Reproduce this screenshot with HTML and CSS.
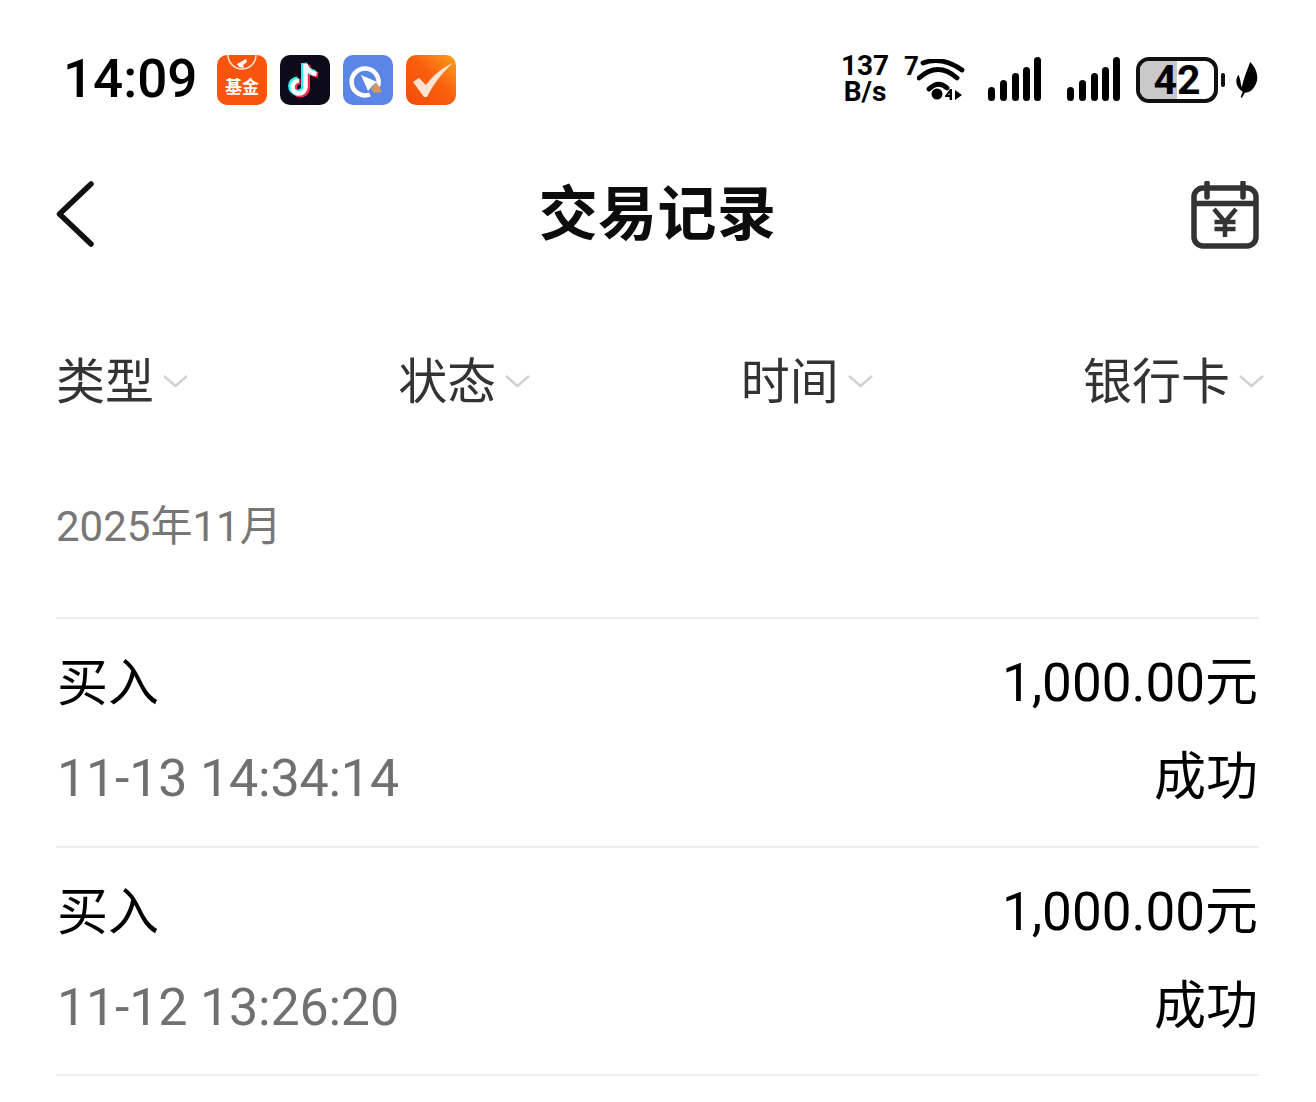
FILE: index.html
```html
<!DOCTYPE html>
<html lang="zh">
<head>
<meta charset="utf-8">
<title>交易记录</title>
<link rel="stylesheet" href="styles.css">
</head>
<body>
<div class="page">
  <header class="status">
    <div class="status-left">
      <span class="clock">14:09</span>
      <div class="apps">
        <svg class="app" viewBox="0 0 50 50"><rect width="50" height="50" rx="10" fill="#f9540b"/><path d="M11 0a14 14 0 0 0 28 0" fill="none" stroke="#fff" stroke-width="1.6" opacity=".8"/><path d="M20 9l9-5 1 3-4 3 1 3-5-1z" fill="#fff"/><text x="25" y="38" class="app-text">基金</text></svg>
        <svg class="app" viewBox="0 0 50 50"><rect width="50" height="50" rx="10" fill="#0c0b17"/><path d="M25 9v23a6.500 6.500 0 1 1-6.500-6.500M25 9c1 6 5 9 11 10" fill="none" stroke="#fd2c55" stroke-width="6" transform="translate(2 1)"/><path d="M25 9v23a6.500 6.500 0 1 1-6.500-6.500M25 9c1 6 5 9 11 10" fill="none" stroke="#25f4ee" stroke-width="6" transform="translate(-1 -1)"/><path d="M25 9v23a6.500 6.500 0 1 1-6.500-6.500M25 9c1 6 5 9 11 10" fill="none" stroke="#fff" stroke-width="4.500" transform="translate(.5 0)"/></svg>
        <svg class="app" viewBox="0 0 50 50"><rect width="50" height="50" rx="10" fill="#5b86e6"/><path d="M35 31a13.500 13.500 0 1 0-8 8.500" fill="none" stroke="#fff" stroke-width="4.500"/><path d="M18 20l16 7-5 4-4 5z" fill="#fff"/><path d="M28 33l6-5 5 9-8 1z" fill="#d69a58"/></svg>
        <svg class="app" viewBox="0 0 50 50"><defs><linearGradient id="tick" x1="1" y1="0" x2="0" y2="1"><stop offset="0" stop-color="#fba01c"/><stop offset=".45" stop-color="#f9600f"/><stop offset="1" stop-color="#f24b08"/></linearGradient></defs><rect width="50" height="50" rx="10" fill="url(#tick)"/><path d="M7 27l6-4 7 7C27 20 36 13 47 8 37 17 28 28 21 42h-3z" fill="#fde3d2"/></svg>
      </div>
    </div>
    <div class="status-right">
      <div class="speed"><span>137</span><span>B/s</span></div>
      <span class="wifi-num">7</span>
      <svg class="wifi" viewBox="0 0 48 42"><path d="M6 4Q25-3 45 11M2 19Q21 2 40 19M12 30Q21 21 30 29" fill="none" stroke="#000" stroke-width="4.800" stroke-linecap="round"/><circle cx="20" cy="35" r="5.500"/><path d="M28 37l5-7h2v11h-2.500v-3H28zM32.500 36v-2l-1.500 2zM38 31l7 5-7 5z"/></svg>
      <svg class="signal" viewBox="0 0 54 44"><rect x="0" y="30" width="7" height="14" rx="3.500"/><rect x="12" y="23" width="7" height="21" rx="3.500"/><rect x="24" y="16" width="7" height="28" rx="3.500"/><rect x="35" y="10" width="7" height="34" rx="3.500"/><rect x="46" y="0" width="7" height="44" rx="3.500"/></svg>
      <svg class="signal second" viewBox="0 0 54 44"><rect x="0" y="30" width="7" height="14" rx="3.500"/><rect x="12" y="23" width="7" height="21" rx="3.500"/><rect x="24" y="16" width="7" height="28" rx="3.500"/><rect x="35" y="10" width="7" height="34" rx="3.500"/><rect x="46" y="0" width="7" height="44" rx="3.500"/></svg>
      <div class="battery"><span class="battery-fill"></span><span class="battery-num">42</span></div>
      <span class="battery-cap"></span>
      <svg class="leaf" viewBox="0 0 22 34"><path d="M14 0c8 8 9 19 2 26-2 2-5 3-7 3l-3 5-1-1 2-5C1 24-1 17 3 12c2 5 2 8 3 12C8 15 11 8 14 0z"/></svg>
    </div>
  </header>

  <nav class="navbar">
    <svg class="back" viewBox="0 0 38 66"><path d="M35 3L3.500 33 35 63" fill="none" stroke="#111" stroke-width="5.500" stroke-linecap="round" stroke-linejoin="round"/></svg>
    <h1 class="title">交易记录</h1>
    <svg class="calendar" viewBox="0 0 68 68"><rect x="3" y="7" width="62" height="58" rx="9" fill="none" stroke="#333" stroke-width="5.500"/><path d="M3 22.500h62" stroke="#333" stroke-width="5.500"/><path d="M16 2v14M52 2v14" stroke="#333" stroke-width="5.500" stroke-linecap="round"/><path d="M23 28l11 13 11-13M34 41v15M23.500 41h21M23.500 48h21" fill="none" stroke="#333" stroke-width="4.500"/></svg>
  </nav>

  <div class="filters">
    <div class="filter"><span>类型</span><svg class="chev" viewBox="0 0 25 14"><path d="M1 2l11.500 10L24 2" fill="none" stroke="#d2d2d2" stroke-width="2.500"/></svg></div>
    <div class="filter"><span>状态</span><svg class="chev" viewBox="0 0 25 14"><path d="M1 2l11.500 10L24 2" fill="none" stroke="#d2d2d2" stroke-width="2.500"/></svg></div>
    <div class="filter"><span>时间</span><svg class="chev" viewBox="0 0 25 14"><path d="M1 2l11.500 10L24 2" fill="none" stroke="#d2d2d2" stroke-width="2.500"/></svg></div>
    <div class="filter"><span>银行卡</span><svg class="chev" viewBox="0 0 25 14"><path d="M1 2l11.500 10L24 2" fill="none" stroke="#d2d2d2" stroke-width="2.500"/></svg></div>
  </div>

  <div class="month">2025年11月</div>

  <ul class="records">
    <li class="record">
      <div class="line"><span class="kind">买入</span><span class="amount">1,000.00元</span></div>
      <div class="line"><span class="when">11-13 14:34:14</span><span class="state">成功</span></div>
    </li>
    <li class="record">
      <div class="line"><span class="kind">买入</span><span class="amount">1,000.00元</span></div>
      <div class="line"><span class="when">11-12 13:26:20</span><span class="state">成功</span></div>
    </li>
  </ul>
</div>
</body>
</html>
```
FILE: styles.css
```css
* { box-sizing: border-box; }
html, body { margin: 0; padding: 0; background: #fff; }
body { font-family: "Noto Sans CJK SC", "Noto Sans", sans-serif; color: #111; overflow: hidden; }
.page { width: 1316px; height: 1102px; padding: 0 57px 0 56px; overflow: hidden; }

.status { display: flex; justify-content: space-between; align-items: center; height: 156px; padding: 4px 0 0 7px; }
.status-left { display: flex; align-items: center; gap: 20px; }
.clock { font-family: Roboto, sans-serif; font-weight: 500; font-size: 53px; line-height: 60px; margin-bottom: 2px; color: #000; }
.apps { display: flex; gap: 13px; }
.app { width: 50px; height: 50px; display: block; }
.app-text { font-family: "Noto Sans CJK SC", serif; font-size: 17px; font-weight: 700; fill: #fff; text-anchor: middle; }

.status-right { display: flex; align-items: center; }
.speed { display: flex; flex-direction: column; align-items: center; font-family: Roboto, sans-serif; font-weight: 700; font-size: 28px; line-height: 26px; margin-bottom: 2px; color: #000; }
.wifi-num { font-family: Roboto, sans-serif; font-weight: 700; font-size: 26px; line-height: 30px; margin: 0 0 28px 15px; color: #000; }
.wifi { width: 48px; height: 42px; margin: 0 0 0 -2px; }
.signal { width: 54px; height: 44px; margin: 0 0 2px 23px; }
.signal.second { margin-left: 25px; }
.battery { position: relative; width: 82px; height: 46px; margin-left: 15px; border: 4px solid #111; border-radius: 13px; display: flex; align-items: center; justify-content: center; }
.battery-fill { position: absolute; left: 0; top: 0; bottom: 0; width: 50%; background: #c9c9c9; border-radius: 9px 0 0 9px; }
.battery-num { position: relative; font-family: Roboto, sans-serif; font-weight: 700; font-size: 41px; line-height: 38px; color: #000; }
.battery-cap { width: 4px; height: 14px; margin-left: 3px; background: #111; border-radius: 2px; }
.leaf { width: 24px; height: 36px; margin-left: 10px; }

.navbar { display: grid; grid-template-columns: 1fr auto 1fr; align-items: center; height: 116px; }
.back { width: 38px; height: 66px; display: block; }
.title { margin: 0 0 8px; font-size: 59px; line-height: 70px; font-weight: 700; letter-spacing: .4px; color: #0c0c0c; }
.calendar { width: 68px; height: 68px; display: block; justify-self: end; margin-top: 2px; }

.filters { display: flex; justify-content: space-between; align-items: center; height: 80px; margin: 66px -5px 0 0; }
.filter { display: flex; align-items: center; gap: 9px; }
.filter span { font-size: 49px; line-height: 60px; color: #333; }
.chev { width: 25px; height: 14px; margin-top: 6px; }

.month { height: 199px; padding: 80px 0 0 0; font-family: Roboto, "Noto Sans CJK SC", sans-serif; font-size: 42px; line-height: 58px; color: #777; }

.records { list-style: none; margin: 0; padding: 0; border-top: 2px solid #eee; }
.record { height: 228.500px; padding-top: 30px; border-bottom: 2px solid #eee; }
.line { display: flex; justify-content: space-between; align-items: center; height: 68px; margin-bottom: 27px; padding: 0 1px; }
.kind, .state { font-size: 51px; line-height: 68px; color: #000; }
.kind { margin-bottom: 8px; }
.state { font-size: 52px; margin-bottom: 10px; }
.amount { font-family: Roboto, "Noto Sans CJK SC", sans-serif; font-size: 53px; line-height: 68px; color: #000; }
.when { font-family: Roboto, sans-serif; font-size: 52px; line-height: 68px; margin-top: 2px; letter-spacing: -.2px; color: #707070; }
```
